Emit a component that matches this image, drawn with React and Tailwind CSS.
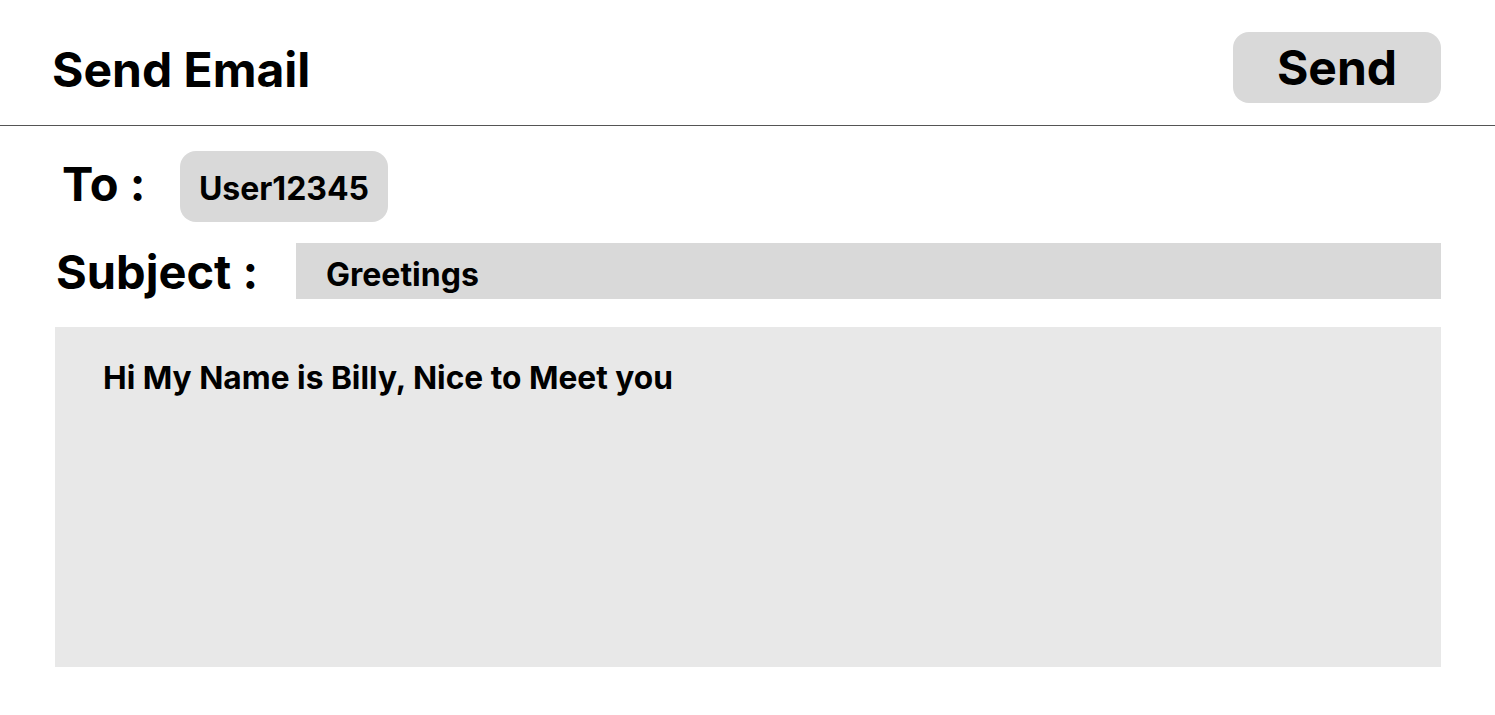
export default function App() {
  return (
    <div className="w-[1495px] h-[715px] bg-white text-black font-['Inter',sans-serif]">
      <header className="h-[125px] pt-[10px] pl-[52px] pr-[54px] flex items-center justify-between">
        <h1 className="mt-[5px] text-[48px] leading-none font-bold">Send Email</h1>
        <button className="w-[208px] h-[71px] rounded-[16px] bg-[#d9d9d9] text-[48px] leading-none font-bold flex items-center justify-center">
          Send
        </button>
      </header>
      <div className="h-px bg-[#555]" />
      <div className="mt-[25px] pl-[62px] flex items-center">
        <div className="w-[118px] mb-[7px] text-[47px] leading-none font-bold">To :</div>
        <div className="w-[208px] h-[71px] rounded-[16px] bg-[#d9d9d9] flex items-center justify-center text-[32px] leading-none font-bold">
          <span className="mt-[5px]">User12345</span>
        </div>
      </div>
      <div className="mt-[21px] pl-[56px] pr-[54px] flex items-center">
        <div className="w-[240px] text-[47px] leading-none font-bold">Subject :</div>
        <div className="flex-1 h-[56px] bg-[#d9d9d9] pl-[30px] flex items-center text-[32px] leading-none font-bold">
          <span className="mt-[7px]">Greetings</span>
        </div>
      </div>
      <div className="mt-[28px] ml-[55px] mr-[54px] h-[340px] bg-[#e8e8e8] pl-[48px] pt-[32px]">
        <p className="text-[31.7px] leading-[1.21] font-bold">Hi My Name is Billy, Nice to Meet you</p>
      </div>
    </div>
  );
}
